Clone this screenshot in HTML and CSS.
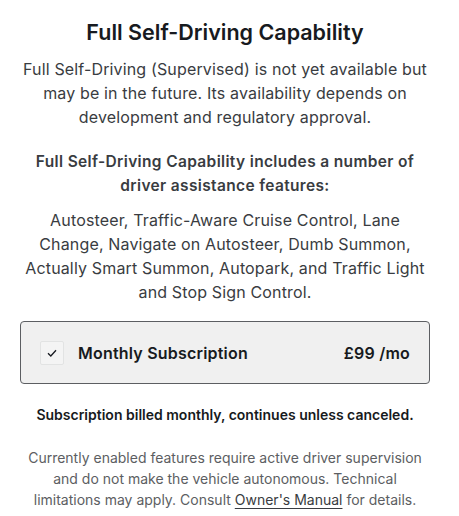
FILE: index.html
```html
<!DOCTYPE html>
<html lang="en">
<head>
  <meta charset="UTF-8">
  <meta name="viewport" content="width=device-width, initial-scale=1.0">
  <title>Full Self-Driving Capability</title>
  <link rel="stylesheet" href="styles.css">
</head>
<body>
  <div class="container">
    <h1>Full Self-Driving Capability</h1>
    <p class="intro">Full Self-Driving (Supervised) is not yet available but may be in the future. Its availability depends on development and regulatory approval.</p>
    <p class="includes">Full Self-Driving Capability includes a number of driver assistance features:</p>
    <p class="features">Autosteer, Traffic-Aware Cruise Control, Lane Change, Navigate on Autosteer, Dumb Summon, Actually Smart Summon, Autopark, and Traffic Light and Stop Sign Control.</p>

    <div class="option">
      <span class="check">
        <svg width="12" height="12" viewBox="0 0 12 12"><path d="M2 6.3 L4.8 9 L10 3.2" fill="none" stroke="#171a20" stroke-width="1.3"/></svg>
      </span>
      <span class="option-name">Monthly Subscription</span>
      <span class="option-price">£99 /mo</span>
    </div>

    <p class="billing">Subscription billed monthly, continues unless canceled.</p>
    <p class="disclaimer">Currently enabled features require active driver supervision and do not make the vehicle autonomous. Technical limitations may apply. Consult <a href="#">Owner's Manual</a> for details.</p>
  </div>
</body>
</html>
```

FILE: styles.css
```css
body {
  font-family: Inter, "Noto Sans", sans-serif;
  margin: 0;
  background-color: #ffffff;
  color: #393c41;
}
.container {
  width: 410px;
  margin-left: 20px;
  padding-top: 16px;
  text-align: center;
}
h1 {
  font-size: 21.5px;
  font-weight: 600;
  color: #171a20;
  margin: 0 0 9px;
  line-height: 32px;
}
p {
  margin: 0;
}
.intro, .features {
  font-size: 16px;
  line-height: 24px;
  letter-spacing: 0.15px;
}
.intro {
  margin-bottom: 21px;
}
.includes {
  font-size: 15.5px;
  font-weight: 600;
  line-height: 24px;
  letter-spacing: 0.35px;
  padding: 0 8px;
  margin-bottom: 10px;
}
.features {
  margin-bottom: 17px;
}
.option {
  display: flex;
  align-items: center;
  height: 61px;
  padding: 0 19px;
  border: 1px solid #5c5e62;
  border-radius: 4px;
  background-color: #f0f0f0;
  text-align: left;
}
.check {
  width: 22px;
  height: 22px;
  border: 1px solid #e2e3e3;
  border-radius: 2px;
  background-color: #f4f4f4;
  display: flex;
  align-items: center;
  justify-content: center;
  margin-right: 14px;
}
.option-name {
  flex: 1;
  font-size: 16px;
  font-weight: 600;
  letter-spacing: 0.2px;
  color: #171a20;
}
.option-price {
  font-size: 16px;
  font-weight: 600;
  letter-spacing: 0.2px;
  color: #171a20;
}
.billing {
  font-size: 14px;
  font-weight: 600;
  line-height: 20px;
  color: #171a20;
  margin-top: 21px;
  margin-bottom: 22px;
}
.disclaimer {
  font-size: 14px;
  line-height: 21px;
  color: #5c5e62;
}
.disclaimer a {
  color: #393c41;
  text-decoration: underline;
  text-underline-offset: 3px;
}
```
